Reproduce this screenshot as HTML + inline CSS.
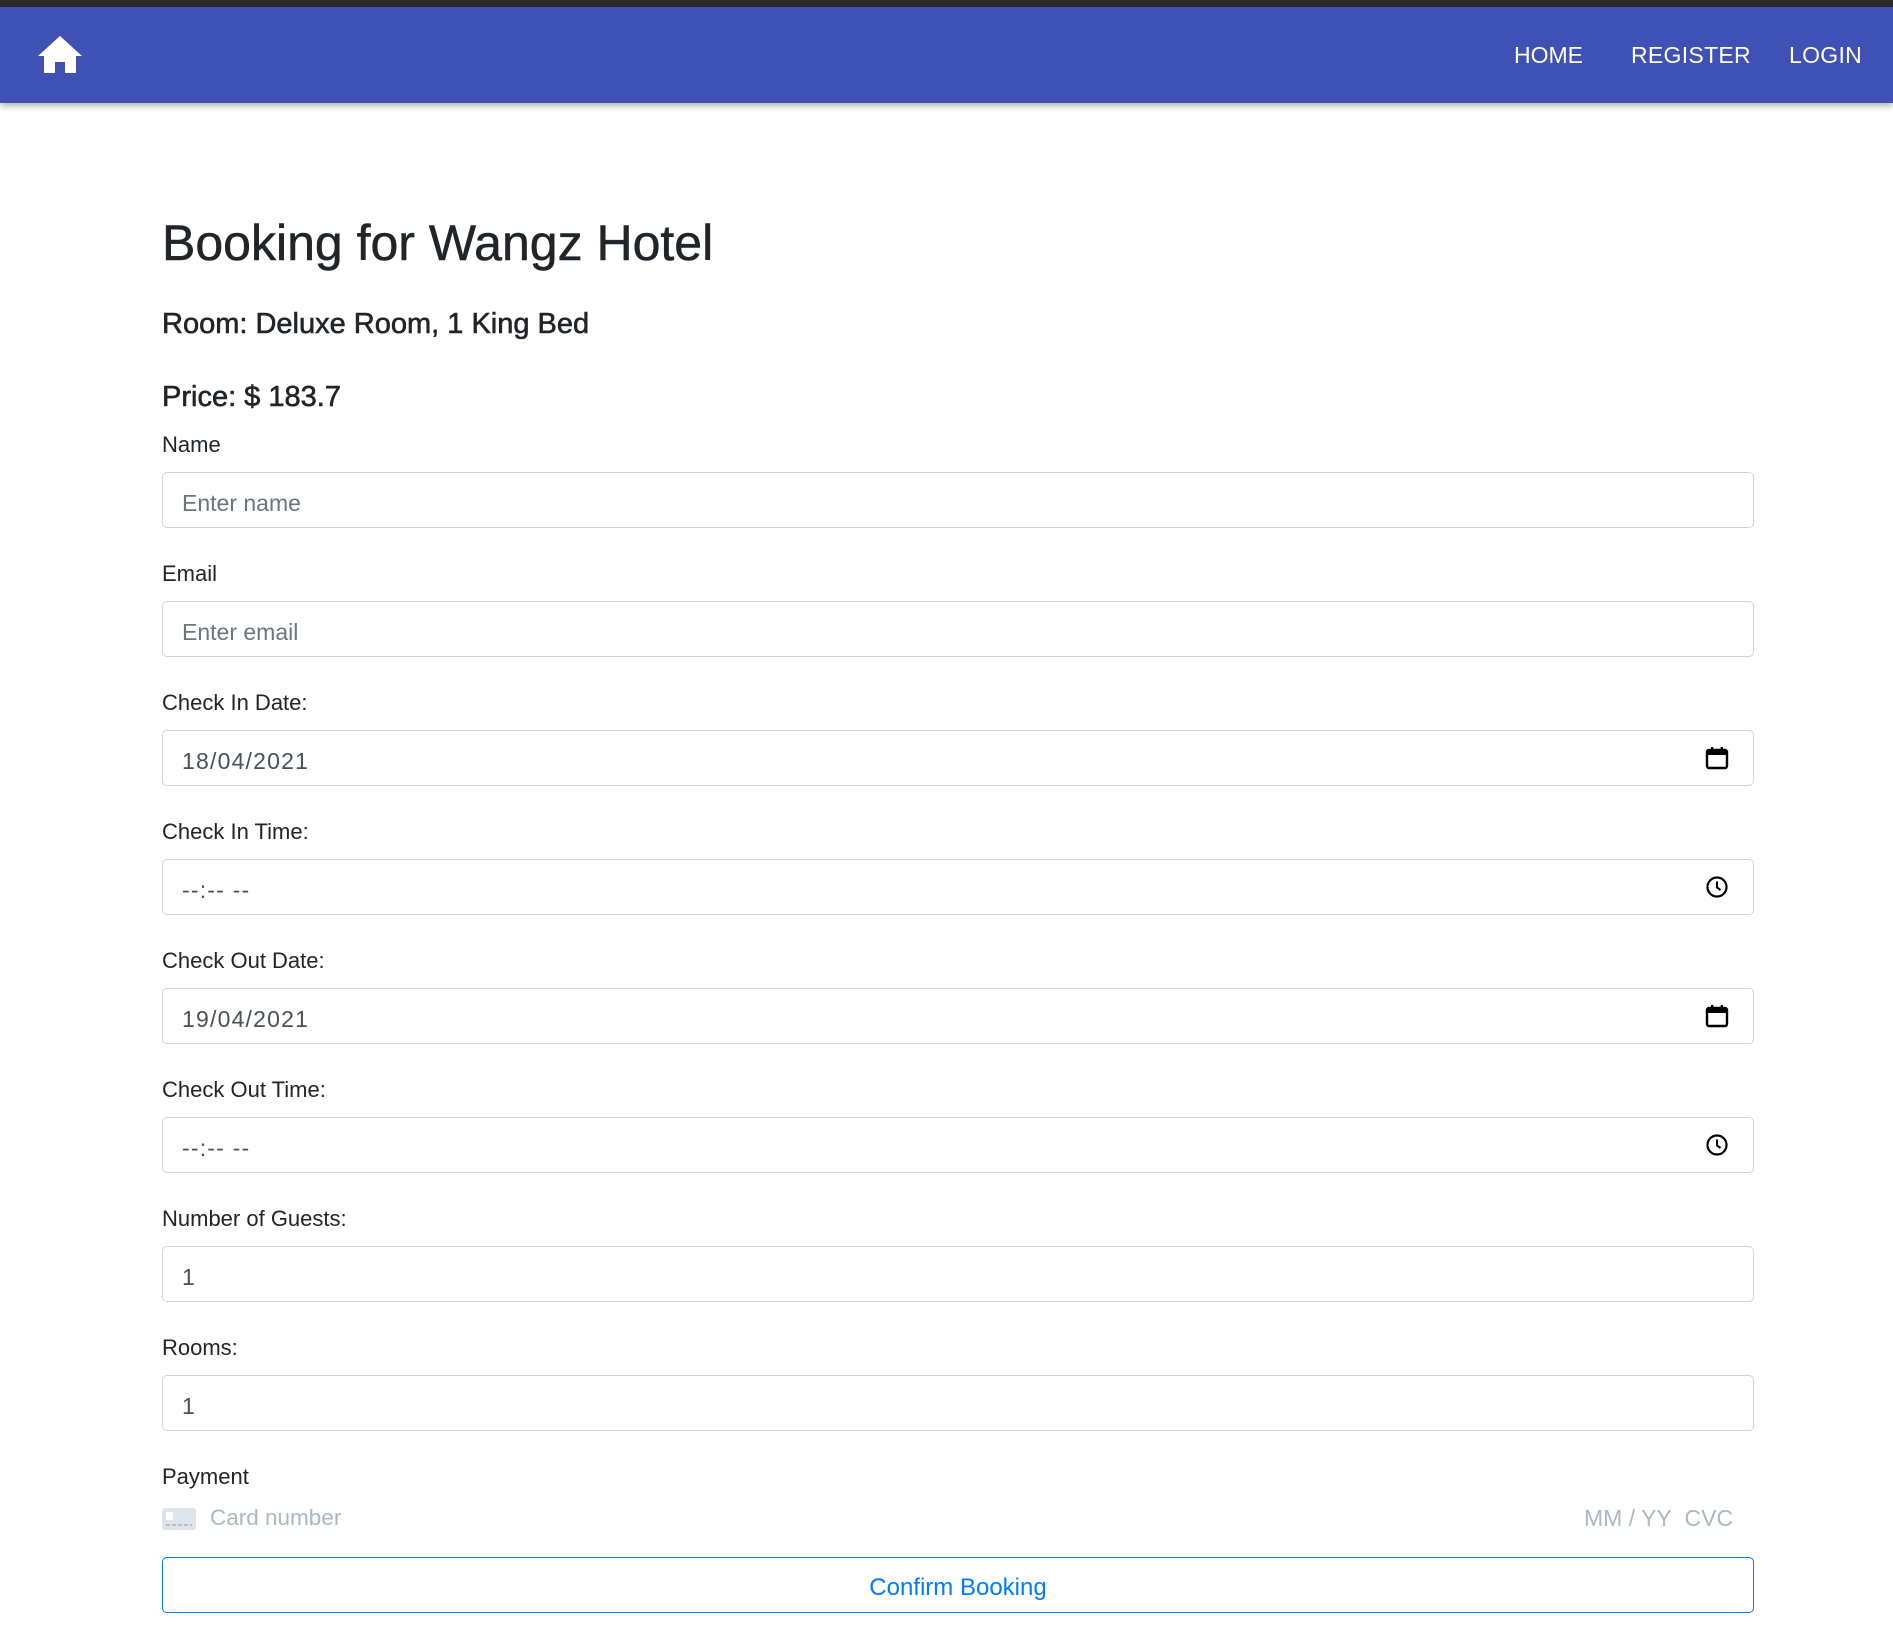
<!DOCTYPE html>
<html><head><meta charset="utf-8"><style>
*{box-sizing:border-box;margin:0;padding:0}
body{width:1893px;height:1637px;background:#fff;font-family:"Liberation Sans",sans-serif;color:#212529;position:relative;overflow:hidden}
.top{position:absolute;left:0;top:0;width:1893px;height:7px;background:#2a2a2a}
.nav{position:absolute;left:0;top:7px;width:1893px;height:96px;background:#3f51b5;box-shadow:0 3px 6px rgba(0,0,0,.3)}
.nav a{position:absolute;top:35px;color:#fff;font-size:23px;text-decoration:none}
.abs{position:absolute;white-space:nowrap}
h1{position:absolute;left:162px;top:213px;font-size:50px;font-weight:normal;line-height:60px;-webkit-text-stroke:0.5px #212529}
.h4{font-size:29px;left:162px;-webkit-text-stroke:0.6px #212529}
.lbl{font-size:22px;left:162px}
.inp{position:absolute;left:162px;width:1592px;height:56px;border:1px solid #ced4da;border-radius:5px;font-size:23px;padding-left:19px;padding-top:3px;line-height:54px;color:#495057}
.ph{color:#6c757d}
.dt{letter-spacing:1.2px}
.ic{position:absolute;right:24px;top:15px}
</style></head><body>
<div class="top"></div>
<div class="nav">
<svg style="position:absolute;left:38px;top:29px" width="44" height="37" viewBox="0 0 44 37"><path d="M22 0 L44 20 L38 20 L38 37 L27 37 L27 26 L17 26 L17 37 L6 37 L6 20 L0 20 Z" fill="#fff"/></svg>
<a style="left:1514px">HOME</a><a style="left:1631px;letter-spacing:0.3px">REGISTER</a><a style="left:1789px;letter-spacing:0.3px">LOGIN</a>
</div>
<h1>Booking for Wangz Hotel</h1>
<div class="abs h4" style="top:308px">Room: Deluxe Room, 1 King Bed</div>
<div class="abs h4" style="top:381px">Price: $ 183.7</div>

<div class="abs lbl" style="top:432px">Name</div>
<div class="inp ph" style="top:472px">Enter name</div>
<div class="abs lbl" style="top:561px">Email</div>
<div class="inp ph" style="top:601px">Enter email</div>
<div class="abs lbl" style="top:690px">Check In Date:</div>
<div class="inp dt" style="top:730px">18/04/2021<svg class="ic" width="24" height="24" viewBox="0 0 24 24"><rect x="2" y="4" width="20" height="18" rx="2" fill="none" stroke="#000" stroke-width="2.4"/><rect x="2" y="4" width="20" height="5" fill="#000"/><rect x="6" y="1" width="2.4" height="5" fill="#000"/><rect x="15.6" y="1" width="2.4" height="5" fill="#000"/></svg></div>
<div class="abs lbl" style="top:819px">Check In Time:</div>
<div class="inp dt" style="top:859px">--:-- --<svg class="ic" width="24" height="24" viewBox="0 0 24 24"><circle cx="12" cy="12" r="9.5" fill="none" stroke="#000" stroke-width="2.2"/><path d="M12 6.5V12.5L15.5 15" fill="none" stroke="#000" stroke-width="2"/></svg></div>
<div class="abs lbl" style="top:948px">Check Out Date:</div>
<div class="inp dt" style="top:988px">19/04/2021<svg class="ic" width="24" height="24" viewBox="0 0 24 24"><rect x="2" y="4" width="20" height="18" rx="2" fill="none" stroke="#000" stroke-width="2.4"/><rect x="2" y="4" width="20" height="5" fill="#000"/><rect x="6" y="1" width="2.4" height="5" fill="#000"/><rect x="15.6" y="1" width="2.4" height="5" fill="#000"/></svg></div>
<div class="abs lbl" style="top:1077px">Check Out Time:</div>
<div class="inp dt" style="top:1117px">--:-- --<svg class="ic" width="24" height="24" viewBox="0 0 24 24"><circle cx="12" cy="12" r="9.5" fill="none" stroke="#000" stroke-width="2.2"/><path d="M12 6.5V12.5L15.5 15" fill="none" stroke="#000" stroke-width="2"/></svg></div>
<div class="abs lbl" style="top:1206px">Number of Guests:</div>
<div class="inp" style="top:1246px">1</div>
<div class="abs lbl" style="top:1335px">Rooms:</div>
<div class="inp" style="top:1375px">1</div>
<div class="abs lbl" style="top:1464px">Payment</div>
<svg style="position:absolute;left:162px;top:1508px" width="34" height="22" viewBox="0 0 34 22"><rect width="34" height="22" rx="3" fill="#dfe3ea"/><rect x="4" y="4" width="7" height="8" fill="#fff"/><path d="M4 17h26" stroke="#b7bfcb" stroke-width="2" stroke-dasharray="4 2"/></svg>
<div class="abs" style="left:210px;top:1505px;font-size:22.5px;color:#aab7c4">Card number</div>
<div class="abs" style="left:1584px;top:1505px;font-size:23px;color:#aab7c4">MM / YY&nbsp;&nbsp;CVC</div>
<div style="position:absolute;left:162px;top:1557px;width:1592px;height:56px;border:1px solid #007bff;border-radius:5px;color:#007bff;font-size:24px;text-align:center;line-height:54px;padding-top:3px">Confirm Booking</div>
</body></html>
